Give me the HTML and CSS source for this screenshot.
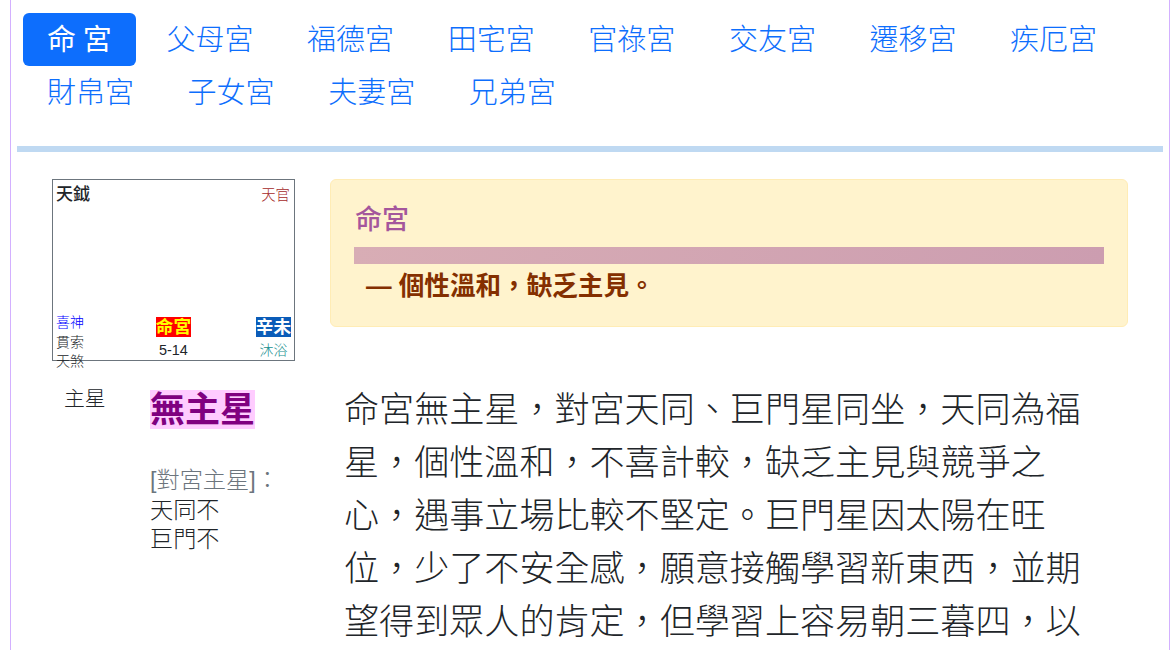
FILE: index.html
```html
<!DOCTYPE html>
<html lang="zh-Hant">
<head>
<meta charset="utf-8">
<title>命宮</title>
<link rel="stylesheet" href="styles.css">
</head>
<body>
<div class="page">
  <nav class="tabs">
    <a class="tab active">命 宮</a>
    <a class="tab">父母宮</a>
    <a class="tab">福德宮</a>
    <a class="tab">田宅宮</a>
    <a class="tab">官祿宮</a>
    <a class="tab">交友宮</a>
    <a class="tab">遷移宮</a>
    <a class="tab">疾厄宮</a>
    <a class="tab">財帛宮</a>
    <a class="tab">子女宮</a>
    <a class="tab">夫妻宮</a>
    <a class="tab">兄弟宮</a>
  </nav>
  <hr class="rule">
  <div class="content">
    <aside class="side">
      <div class="tile">
        <div class="tile-top">
          <span class="star">天鉞</span>
          <span class="minor">天官</span>
        </div>
        <div class="tile-bottom">
          <div class="tile-left">
            <span class="god">喜神</span>
            <span>貫索</span>
            <span>天煞</span>
          </div>
          <div class="tile-center">
            <span class="palace">命宮</span>
            <span class="range">5-14</span>
          </div>
          <div class="tile-right">
            <span class="stem">辛未</span>
            <span class="phase">沐浴</span>
          </div>
        </div>
      </div>
      <div class="stars">
        <div class="stars-label">主星</div>
        <div class="stars-body">
          <mark class="no-star">無主星</mark>
          <div class="opposite">
            <div class="opposite-title">[對宮主星]：</div>
            <div>天同不</div>
            <div>巨門不</div>
          </div>
        </div>
      </div>
    </aside>
    <main class="main">
      <section class="alert">
        <h2 class="alert-title">命宮</h2>
        <div class="alert-bar"></div>
        <p class="alert-text">— 個性溫和，缺乏主見。</p>
      </section>
      <p class="body-text">命宮無主星，對宮天同、巨門星同坐，天同為福星，個性溫和，不喜計較，缺乏主見與競爭之心，遇事立場比較不堅定。巨門星因太陽在旺位，少了不安全感，願意接觸學習新東西，並期望得到眾人的肯定，但學習上容易朝三暮四，以</p>
    </main>
  </div>
</div>
</body>
</html>
```
FILE: styles.css
```css
* { box-sizing: border-box; }
html, body { margin: 0; height: 650px; overflow: hidden; background: #fff; }
body { font-family: "Liberation Sans", "Noto Sans CJK TC", sans-serif; color: #212529; }
.page {
  margin-left: 10px;
  width: 1160px;
  height: 650px;
  border-left: 1px solid #d3b0ff;
  border-right: 1px solid #d3b0ff;
  padding: 13px 6px 0;
}
.tabs { display: flex; flex-wrap: wrap; column-gap: 5.6px; padding-left: 6px; }
.tab {
  padding: 9px 24px 7px;
  font-size: 29px;
  font-weight: 300;
  line-height: 37px;
  color: #0d6efd;
  border-radius: 6px;
  white-space: pre;
}
.tab.active { margin-right: 1px; background: #0d6efd; color: #fff; font-weight: 400; word-spacing: -1.2px; }
.rule { height: 6px; margin: 27px 0 0; border: 0; background: #bfd9f2; }
.content { display: flex; padding: 27px 0 0 35px; }
.side { width: 243px; flex: none; }
.tile {
  width: 243px;
  height: 182px;
  border: 1px solid #6c757d;
  padding: 3px 3px 0;
}
.tile-top { display: flex; justify-content: space-between; height: 22px; padding-right: 1px; }
.star { font-size: 17px; line-height: 24px; font-weight: 500; }
.minor { font-size: 14.4px; line-height: 24px; font-weight: 300; color: #a52a2a; }
.tile-bottom { display: flex; justify-content: space-between; margin-top: 112px; }
.tile-left, .tile-center, .tile-right { display: flex; flex-direction: column; align-items: center; font-size: 14px; line-height: 19.5px; }
.tile-left { align-items: flex-start; margin-top: -4px; font-weight: 300; }
.tile-center { margin-left: 7px; }
.god { color: #0000ff; }
.palace { background: #ff0000; color: #ffff00; font-weight: 700; font-size: 17.6px; line-height: 20px; }
.range { font-size: 14.4px; line-height: 26px; }
.stem { background: #0b5cb8; color: #fff; font-weight: 700; font-size: 17.6px; line-height: 20px; }
.phase { font-size: 14px; line-height: 26px; font-weight: 300; color: #20908f; }
.stars { display: flex; margin-top: 29px; }
.stars-label { width: 98px; padding-left: 12px; font-size: 20.8px; font-weight: 300; line-height: 18px; }
.no-star { background: #ffccff; color: #800080; font-size: 35px; font-weight: 700; line-height: 39px; display: block; width: 105px; white-space: nowrap; }
.opposite { margin-top: 37px; font-size: 23.2px; font-weight: 300; line-height: 29.5px; }
.opposite-title { color: #6c757d; white-space: nowrap; }
.main { margin-left: 35px; width: 798px; flex: none; }
.alert {
  height: 148px;
  background: #fff3cd;
  border: 1px solid #ffecb5;
  border-radius: 6px;
  padding: 20px 23px 0;
}
.alert-title { margin: 0 0 0 1px; font-size: 27px; line-height: 40px; font-weight: 500; color: #a4569c; }
.alert-bar { height: 17px; margin-top: 7px; background: linear-gradient(100deg, #d8adb5, #cc9db0); }
.alert-text { margin: 5px 0 0 12px; font-size: 25.6px; line-height: 34px; font-weight: 700; color: #842f00; }
.body-text { margin: 56px 0 0 14px; width: 742px; font-size: 35.1px; line-height: 53px; color: #212529; font-weight: 300; }
```
